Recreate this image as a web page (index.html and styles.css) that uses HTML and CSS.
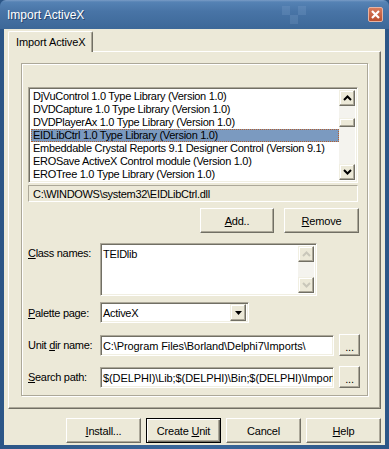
FILE: index.html
```html
<!DOCTYPE html>
<html lang="en">
<head>
    <meta charset="UTF-8">
    <title>Import ActiveX</title>
    <link rel="stylesheet" href="styles.css">
</head>
<body>
<div class="window">
    <div class="titlebar">
        <span class="title">Import ActiveX</span>
        <div class="tiles">
            <i></i><i></i><i></i><i></i><i></i><i></i>
        </div>
        <div class="close">
            <svg width="9" height="9" viewBox="0 0 9 9"><path d="M1 1 L8 8 M8 1 L1 8" stroke="#fff" stroke-width="2.2"/></svg>
        </div>
    </div>
    <div class="client">
        <div class="tabs">
            <div class="tab">Import ActiveX</div>
        </div>
        <div class="sheet">
            <div class="group">
                <div class="listbox">
                    <ul class="items">
                        <li>DjVuControl 1.0 Type Library (Version 1.0)</li>
                        <li>DVDCapture 1.0 Type Library (Version 1.0)</li>
                        <li>DVDPlayerAx 1.0 Type Library (Version 1.0)</li>
                        <li class="selected">EIDLibCtrl 1.0 Type Library (Version 1.0)</li>
                        <li>Embeddable Crystal Reports 9.1 Designer Control (Version 9.1)</li>
                        <li>EROSave ActiveX Control module (Version 1.0)</li>
                        <li>EROTree 1.0 Type Library (Version 1.0)</li>
                    </ul>
                    <div class="vscroll">
                        <div class="sbtn"><svg width="9" height="6" viewBox="0 0 9 6"><path d="M1 5 L4.5 1.5 L8 5" fill="none" stroke="#000" stroke-width="2"/></svg></div>
                        <div class="track"><div class="thumb"></div></div>
                        <div class="sbtn"><svg width="9" height="6" viewBox="0 0 9 6"><path d="M1 1 L4.5 4.5 L8 1" fill="none" stroke="#000" stroke-width="2"/></svg></div>
                    </div>
                </div>
                <div class="pathbox">C:\WINDOWS\system32\EIDLibCtrl.dll</div>
                <div class="list-buttons">
                    <button class="btn btn-add"><u>A</u>dd..</button>
                    <button class="btn btn-remove"><u>R</u>emove</button>
                </div>
                <div class="row row-class">
                    <label><u>C</u>lass names:</label>
                    <div class="memo">
                        <span class="memo-text">TEIDlib</span>
                        <div class="vscroll disabled">
                            <div class="sbtn"><svg width="9" height="6" viewBox="0 0 9 6"><path d="M1 5 L4.5 1.5 L8 5" fill="none" stroke="#c9c7ba" stroke-width="2"/></svg></div>
                            <div class="track"></div>
                            <div class="sbtn"><svg width="9" height="6" viewBox="0 0 9 6"><path d="M1 1 L4.5 4.5 L8 1" fill="none" stroke="#c9c7ba" stroke-width="2"/></svg></div>
                        </div>
                    </div>
                </div>
                <div class="row row-palette">
                    <label><u>P</u>alette page:</label>
                    <div class="combo">
                        <span class="combo-text">ActiveX</span>
                        <div class="dropbtn"><svg width="7" height="4" viewBox="0 0 7 4"><path d="M0 0 H7 L3.5 4 Z" fill="#000"/></svg></div>
                    </div>
                </div>
                <div class="row row-unit">
                    <label>Unit <u>d</u>ir name:</label>
                    <div class="edit">C:\Program Files\Borland\Delphi7\Imports\</div>
                    <button class="btn btn-dots">...</button>
                </div>
                <div class="row row-search">
                    <label><u>S</u>earch path:</label>
                    <div class="edit">$(DELPHI)\Lib;$(DELPHI)\Bin;$(DELPHI)\Imports</div>
                    <button class="btn btn-dots">...</button>
                </div>
            </div>
        </div>
        <div class="dialog-buttons">
            <button class="btn"><u>I</u>nstall...</button>
            <button class="btn default">Create <u>U</u>nit</button>
            <button class="btn">Cancel</button>
            <button class="btn"><u>H</u>elp</button>
        </div>
    </div>
</div>
</body>
</html>
```

FILE: styles.css
```css
body {
    margin: 0;
    width: 389px;
    height: 449px;
    font-family: "Liberation Sans", Arial, sans-serif;
    font-size: 11px;
    letter-spacing: -0.3px;
    color: #000;
}
.window {
    width: 389px;
    height: 449px;
    box-sizing: border-box;
    padding: 0 4px 4px 4px;
    background: linear-gradient(to right, #2c5687, #3a679b 50%, #2c5687);
    display: flex;
    flex-direction: column;
}
.titlebar {
    height: 29px;
    margin: 0 -4px;
    padding: 0 6px 0 7px;
    display: flex;
    align-items: center;
    background: linear-gradient(to bottom, #7a9cc6 0, #5582b4 2px, #4874a6 40%, #3d6898 100%);
    border-radius: 6px 6px 0 0;
    position: relative;
}
.title {
    color: #fff;
    font-size: 12px;
    letter-spacing: 0;
    text-shadow: 1px 1px 0 #26456e;
    flex: 1;
}
.tiles {
    position: absolute;
    left: 282px;
    top: 6px;
    width: 24px;
    height: 18px;
    display: grid;
    grid-template-columns: repeat(3, 8px);
    grid-template-rows: repeat(2, 9px);
    opacity: 0.2;
}
.tiles i:nth-child(odd) {
    background: #8fb0d6;
}
.close {
    width: 15px;
    height: 15px;
    box-sizing: border-box;
    border: 1px solid #e6b4a4;
    border-radius: 2px;
    background: linear-gradient(to bottom, #d77b5d, #b94f2f);
    display: flex;
    align-items: center;
    justify-content: center;
}
.client {
    flex: 1;
    background: #ece9d8;
    padding: 2px 4px 2px 4px;
    display: flex;
    flex-direction: column;
}
.tabs {
    display: flex;
    height: 20px;
    position: relative;
    z-index: 1;
}
.tab {
    width: 85px;
    height: 21px;
    box-sizing: border-box;
    padding: 4px 0 0 7px;
    background: #ece9d8;
    border-top: 1px solid #fff;
    border-left: 1px solid #fff;
    border-right: 1px solid #716f64;
    box-shadow: inset -1px 0 #aca899;
    border-radius: 2px 2px 0 0;
    white-space: nowrap;
    letter-spacing: -0.1px;
}
.sheet {
    width: 373px;
    height: 358px;
    box-sizing: border-box;
    border-top: 1px solid #fff;
    border-left: 1px solid #fff;
    border-right: 1px solid #716f64;
    border-bottom: 1px solid #716f64;
    box-shadow: inset -1px -1px #aca899;
    padding: 11px 0 0 12px;
}
.group {
    width: 347px;
    height: 333px;
    box-sizing: border-box;
    border: 1px solid #aca899;
    box-shadow: inset 1px 1px #fff, 1px 1px #fff;
    padding: 23px 0 0 6px;
    display: flex;
    flex-direction: column;
}
.listbox {
    width: 330px;
    height: 96px;
    box-sizing: border-box;
    border-top: 1px solid #aca899;
    border-left: 1px solid #aca899;
    border-right: 1px solid #fff;
    border-bottom: 1px solid #fff;
    box-shadow: inset 1px 1px #716f64, inset -1px -1px #f1efe2;
    background: #fff;
    padding: 2px;
    display: flex;
}
.items {
    list-style: none;
    margin: 0;
    padding: 0;
    flex: 1;
    overflow: hidden;
}
.items li {
    height: 13px;
    line-height: 13px;
    padding-left: 2px;
    white-space: nowrap;
    box-sizing: border-box;
}
.items li.selected {
    background: #7b9ac0;
    outline: 1px dotted #b5602e;
    outline-offset: -1px;
}
.vscroll {
    width: 16px;
    display: flex;
    flex-direction: column;
    background: #f4f3ee;
}
.sbtn {
    width: 16px;
    height: 16px;
    box-sizing: border-box;
    background: #ece9d8;
    border-top: 1px solid #f1efe2;
    border-left: 1px solid #f1efe2;
    border-right: 1px solid #716f64;
    border-bottom: 1px solid #716f64;
    box-shadow: inset -1px -1px #aca899, inset 1px 1px #fff;
    display: flex;
    align-items: center;
    justify-content: center;
}
.track {
    flex: 1;
    padding-top: 12px;
}
.thumb {
    height: 9px;
    box-sizing: border-box;
    background: #ece9d8;
    border-top: 1px solid #f1efe2;
    border-left: 1px solid #f1efe2;
    border-right: 1px solid #716f64;
    border-bottom: 1px solid #716f64;
    box-shadow: inset -1px -1px #aca899, inset 1px 1px #fff;
}
.pathbox {
    width: 330px;
    height: 17px;
    box-sizing: border-box;
    margin-top: 2px;
    border-top: 1px solid #aca899;
    border-left: 1px solid #aca899;
    border-right: 1px solid #fff;
    border-bottom: 1px solid #fff;
    padding: 1px 0 0 4px;
    line-height: 14px;
}
.list-buttons {
    width: 331px;
    display: flex;
    justify-content: flex-end;
    gap: 10px;
    margin-top: 6px;
}
.btn {
    font-family: inherit;
    font-size: 11px;
    letter-spacing: -0.2px;
    color: #000;
    background: #ece9d8;
    width: 75px;
    height: 25px;
    box-sizing: border-box;
    padding: 0;
    border-top: 1px solid #fff;
    border-left: 1px solid #fff;
    border-right: 1px solid #716f64;
    border-bottom: 1px solid #716f64;
    box-shadow: inset -1px -1px #aca899;
    border-radius: 0;
}
.btn-add {
    width: 74px;
}
.row {
    display: flex;
    align-items: flex-start;
}
.row label {
    width: 72px;
    flex: none;
}
.row-class {
    margin-top: 10px;
}
.row-class label {
    padding-top: 4px;
}
.row-palette {
    margin-top: 6px;
    align-items: center;
}
.row-unit {
    margin-top: 11px;
    align-items: center;
}
.row-search {
    margin-top: 10px;
    align-items: center;
}
.memo {
    width: 217px;
    height: 53px;
    box-sizing: border-box;
    border-top: 1px solid #aca899;
    border-left: 1px solid #aca899;
    border-right: 1px solid #fff;
    border-bottom: 1px solid #fff;
    box-shadow: inset 1px 1px #716f64, inset -1px -1px #f1efe2;
    background: #fff;
    padding: 2px;
    display: flex;
}
.memo-text {
    flex: 1;
    padding: 2px 0 0 0;
}
.vscroll.disabled {
    background: #f4f3ee;
}
.combo {
    width: 149px;
    height: 21px;
    box-sizing: border-box;
    border-top: 1px solid #aca899;
    border-left: 1px solid #aca899;
    border-right: 1px solid #fff;
    border-bottom: 1px solid #fff;
    box-shadow: inset 1px 1px #716f64, inset -1px -1px #f1efe2;
    background: #fff;
    padding: 2px;
    display: flex;
    align-items: center;
}
.combo-text {
    flex: 1;
}
.dropbtn {
    width: 16px;
    height: 17px;
    box-sizing: border-box;
    background: #ece9d8;
    border-top: 1px solid #f1efe2;
    border-left: 1px solid #f1efe2;
    border-right: 1px solid #716f64;
    border-bottom: 1px solid #716f64;
    box-shadow: inset -1px -1px #aca899, inset 1px 1px #fff;
    display: flex;
    align-items: center;
    justify-content: center;
}
.edit {
    width: 234px;
    height: 21px;
    box-sizing: border-box;
    border-top: 1px solid #aca899;
    border-left: 1px solid #aca899;
    border-right: 1px solid #fff;
    border-bottom: 1px solid #fff;
    box-shadow: inset 1px 1px #716f64, inset -1px -1px #f1efe2;
    background: #fff;
    padding: 2px 2px 0 2px;
    line-height: 16px;
    letter-spacing: -0.1px;
    white-space: nowrap;
    overflow: hidden;
}
.btn-dots {
    width: 21px;
    height: 22px;
    margin-left: 5px;
    padding-top: 4px;
}
.dialog-buttons {
    display: flex;
    justify-content: flex-end;
    gap: 5px;
    margin-top: 9px;
}
.btn.default {
    border: 1px solid #000;
    box-shadow: inset 1px 1px #fff, inset -1px -1px #716f64, inset -2px -2px #aca899;
}
```
